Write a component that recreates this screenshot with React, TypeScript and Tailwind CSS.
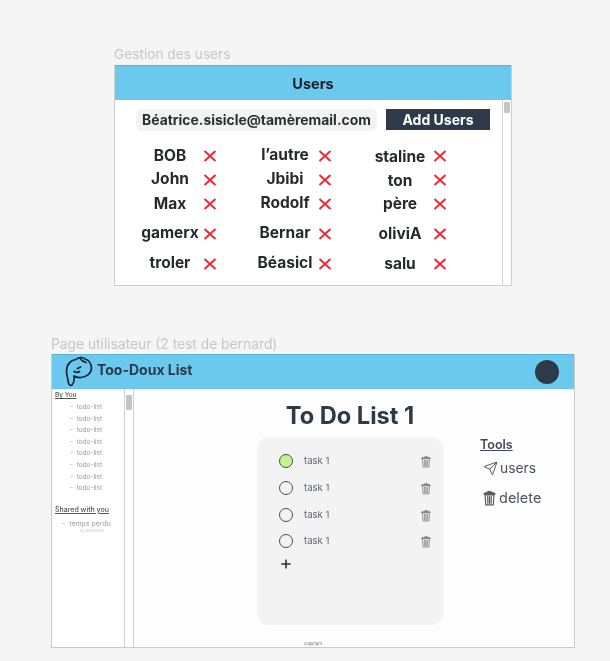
import { Send, Plus } from "lucide-react";

const users: [string, string][] = [
  ["BOB", ""],
  ["l’autre", "-translate-y-[1px]"],
  ["staline", "translate-y-[1px]"],
  ["John", "-translate-y-[1px]"],
  ["Jbibi", "-translate-y-[1px]"],
  ["ton", "translate-y-[1px]"],
  ["Max", ""],
  ["Rodolf", "-translate-y-[1px]"],
  ["père", ""],
  ["gamerx", "-translate-y-[1px]"],
  ["Bernar", "-translate-y-[1px]"],
  ["oliviA", ""],
  ["troler", "-translate-y-[1px]"],
  ["Béasicl", "-translate-y-[1px]"],
  ["salu", ""],
];

const rowHeights = ["h-[24px]", "h-[24px]", "h-[24px]", "h-[36px]", "h-[23px]"];

function RedX() {
  return (
    <svg width="14" height="14" viewBox="0 0 14 14" className="shrink-0 -ml-[2px]">
      <path d="M1.5 2 L12.500 12 M12.500 2 L1.5 12" stroke="#f0252f" strokeWidth="1.9" fill="none" />
    </svg>
  );
}

function TrashIcon({ w, h, color, className = "" }: { w: number; h: number; color: string; className?: string }) {
  return (
    <svg width={w} height={h} viewBox="0 0 12 15" fill="none" stroke={color} strokeWidth="1.1" strokeLinecap="round" className={`shrink-0 ${className}`}>
      <path d="M4.200 2.200 C4.200 0.800 7.800 0.800 7.800 2.200" />
      <path d="M1 3.200 C2.500 2.100 9.500 2.100 11 3.200 L11 4 L1 4 Z" fill={color} />
      <path d="M1.800 4.500 L2.500 14 L9.500 14 L10.200 4.500 Z" />
      <path d="M4.300 6 L4.500 12.500 M6 6 L6 12.500 M7.700 6 L7.500 12.500" />
    </svg>
  );
}

function Logo() {
  return (
    <svg width="30" height="32" viewBox="0 0 30 32" fill="none" stroke="#1a2430" strokeWidth="1.7" strokeLinejoin="round" strokeLinecap="round" className="shrink-0">
      <path d="M3.500 27 C3 23 1.500 19 1.500 15 C1.500 8 6 4 11 3.500 C13 1 18 0.800 20 3 C24 4 26.500 8 26.500 12 C26.500 17 22 21 16 21.500 C13 21.700 10.500 21 9 20 C9.500 23 8.500 27 7 29 C5.500 30 4 29 3.500 27 Z" />
      <path d="M15 2.500 C17 5 19 6 21 6.500" />
      <path d="M12.500 12.500 L15.500 11" />
      <path d="M9 15.500 C11 16.500 13 16.500 14.500 15.500" />
    </svg>
  );
}

function Task({ done, className }: { done?: boolean; className: string }) {
  return (
    <div className={`flex items-center ${className}`}>
      <div className={`w-[14px] h-[14px] rounded-full border-[1.75px] border-[#4a4f55] ${done ? "bg-[#c3f58e]" : ""}`} />
      <span className="ml-[11px] text-[9.5px] text-[#5f656b]">task 1</span>
      <TrashIcon w={10} h={13} color="#858585" className="ml-auto" />
    </div>
  );
}

export default function App() {
  return (
    <div className="w-[610px] h-[661px] overflow-hidden bg-[#f5f5f5] pt-[45px] blur-[0.4px] font-['Inter','Liberation_Sans',sans-serif]">
      <div className="ml-[114px] w-[398px]">
        <div className="h-[20px] text-[13.7px] leading-[18px] text-[#c6c6c6]">Gestion des users</div>
        <div className="h-[221px] bg-white border border-[#cfcfcf] border-t-0 flex flex-col">
          <div className="h-[35px] shrink-0 bg-[#6cc9ee] flex items-center justify-center pt-[1px] text-[14.5px] font-bold text-[#1a1f25] border-t border-[#5ab4d8]">
            Users
          </div>
          <div className="flex-1 flex">
            <div className="flex-1 pl-[21px]">
              <div className="flex mt-[9px] h-[22px]">
                <div className="w-[241px] bg-[#f3f3f3] rounded-md flex items-center justify-center text-[13.9px] font-bold text-[#2b2f33] whitespace-nowrap">
                  Béatrice.sisicle@tamèremail.com
                </div>
                <div className="ml-[9px] w-[104px] h-[21px] bg-[#2d3a4a] flex items-center justify-center text-[14px] font-bold text-white">
                  Add Users
                </div>
              </div>
              <div className="mt-[13px] -ml-[1px]">
                {rowHeights.map((h, r) => (
                  <div key={r} className={`flex items-center ${h}`}>
                    {users.slice(r * 3, r * 3 + 3).map((u) => (
                      <div key={u[0]} className="w-[115px] flex items-center shrink-0">
                        <span className={`w-[70px] text-center text-[15.5px] font-bold text-[#26292d] whitespace-nowrap ${u[1]}`}>{u[0]}</span>
                        <RedX />
                      </div>
                    ))}
                  </div>
                ))}
              </div>
            </div>
            <div className="w-[9px] shrink-0 border-l border-[#d4d4d4] pt-[2px] pl-[1px]">
              <div className="w-[6px] h-[11px] bg-[#c4c4c4] rounded-[1px]" />
            </div>
          </div>
        </div>
      </div>

      <div className="ml-[51px] w-[524px] mt-[48px]">
        <div className="h-[20px] pt-[1px] text-[13.8px] leading-[18px] text-[#c6c6c6] whitespace-nowrap">Page utilisateur (2 test de bernard)</div>
        <div className="h-[294px] bg-[#fdfdfd] border border-[#c9c9c9] border-t-0 flex flex-col">
          <div className="h-[35px] shrink-0 bg-[#6cc9ee] flex items-center pl-[13px] pr-[15px] border-t border-[#5ab4d8]">
            <Logo />
            <span className="ml-[2px] mb-[5px] text-[14px] font-bold text-[#2d3a4a]">Too-Doux List</span>
            <div className="ml-auto mb-[1px] w-[24px] h-[24px] rounded-full bg-[#2d3a4a]" />
          </div>
          <div className="flex-1 flex min-h-0">
            <div className="w-[72px] shrink-0 bg-white pl-[3px] pt-[2px] overflow-hidden">
              <div className="text-[6.5px] leading-[8px] font-medium underline text-[#555]">By You</div>
              <ul className="mt-[3px] text-[6.5px] leading-[11.6px] text-[#999] pl-[15px]">
                {[0, 1, 2, 3, 4, 5, 6, 7].map((i) => (
                  <li key={i} className="whitespace-nowrap">- &nbsp;todo-list</li>
                ))}
              </ul>
              <div className="mt-[11px] text-[7px] leading-[8px] font-medium underline text-[#555] whitespace-nowrap">Shared with you</div>
              <div className="mt-[6px] pl-[7px] text-[7px] leading-[8px] text-[#999] whitespace-nowrap">- &nbsp;temps perdu</div>
              <div className="pl-[25px] text-[4px] leading-[5px] text-[#ccc] whitespace-nowrap">by bernardin</div>
            </div>
            <div className="w-[10px] shrink-0 border-x border-[#cfcfcf] bg-white pt-[6px] pl-[1px]">
              <div className="w-[6px] h-[15px] bg-[#c4c4c4] rounded-[1px]" />
            </div>
            <div className="flex-1 relative flex pl-[123px]">
              <div className="w-[186px] shrink-0 flex flex-col">
                <div className="h-[48px] pt-[6px] flex items-center justify-center text-[23.6px] font-bold text-[#2d3a4a] whitespace-nowrap">To Do List 1</div>
                <div className="h-[188px] bg-[#f3f3f3] rounded-xl pl-[22px] pr-[12px] pt-[17px]">
                  <Task done className="h-[14px]" />
                  <Task className="h-[14px] mt-[13px]" />
                  <Task className="h-[14px] mt-[13px]" />
                  <Task className="h-[14px] mt-[12px]" />
                  <Plus size={14} strokeWidth={2.6} className="mt-[9px] text-[#2b2f33]" />
                </div>
                <div className="mt-[16px] ml-[47px] text-[4px] leading-[5px] text-[#777]">copyright</div>
              </div>
              <div className="ml-[37px] pt-[48px]">
                <div className="text-[12.5px] leading-[15px] font-semibold underline text-[#3f4a57]">Tools</div>
                <div className="mt-[8px] ml-[3px] flex items-center gap-[2px] h-[16px] text-[13.8px] text-[#4a535e]">
                  <Send size={15} strokeWidth={1.3} className="text-[#2d3a4a]" />
                  <span>users</span>
                </div>
                <div className="mt-[14px] ml-[3px] flex items-center gap-[3px] h-[16px] text-[14.5px] text-[#4a535e]">
                  <TrashIcon w={13} h={16} color="#5a5a5a" />
                  <span>delete</span>
                </div>
              </div>
            </div>
          </div>
        </div>
      </div>
    </div>
  );
}
